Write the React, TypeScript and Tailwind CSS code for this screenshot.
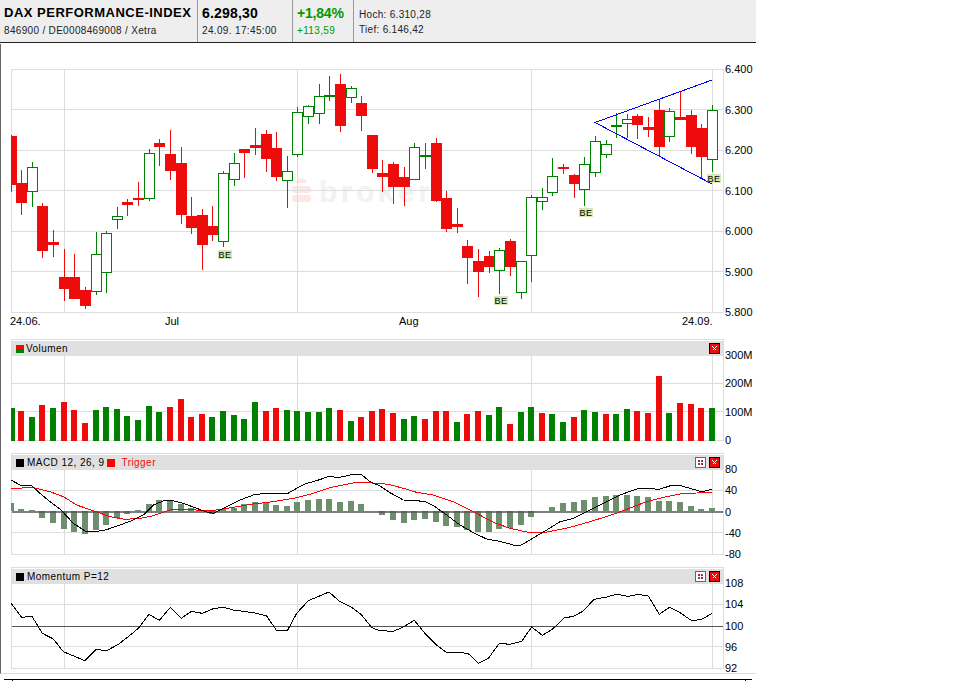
import type { ReactNode } from "react";

const GREEN = "#008000";
const RED = "#ee0b0b";
const GRID = "#dddddd";
const VERTICALS = [64, 297, 531, 712];

// [x, green?, body top, body bottom, wick top, wick bottom], y in 3x crop units from y=60
const CANDLES: [number, number, number, number, number, number][] = [
  [11, 0, 228, 375, 225, 395], [21, 0, 370, 428, 330, 465], [32, 1, 322, 395, 306, 440],
  [42, 0, 438, 572, 430, 593], [53, 0, 546, 554, 510, 590], [64, 0, 652, 686, 567, 722],
  [74, 0, 652, 716, 582, 716], [85, 0, 690, 737, 682, 746], [96, 1, 583, 697, 516, 704],
  [106, 1, 520, 640, 514, 698], [117, 1, 469, 481, 441, 506], [127, 0, 426, 434, 418, 467],
  [138, 0, 414, 419, 366, 437], [149, 1, 280, 418, 267, 422], [159, 0, 250, 260, 237, 318],
  [170, 0, 282, 332, 210, 360], [181, 0, 310, 464, 261, 491], [191, 0, 468, 503, 411, 521],
  [202, 0, 465, 554, 447, 630], [212, 0, 498, 524, 438, 542], [223, 1, 340, 547, 334, 561],
  [234, 1, 310, 361, 279, 377], [244, 0, 267, 278, 267, 353], [255, 0, 255, 263, 204, 284],
  [266, 0, 222, 296, 210, 335], [276, 0, 264, 350, 216, 362], [287, 1, 334, 364, 288, 443],
  [297, 1, 157, 286, 141, 292], [308, 1, 139, 172, 136, 191], [319, 1, 109, 163, 72, 191],
  [329, 1, 105, 109, 48, 122], [340, 0, 72, 197, 42, 215], [351, 1, 85, 115, 79, 128],
  [361, 0, 129, 167, 108, 212], [372, 0, 225, 326, 225, 338], [382, 0, 339, 350, 300, 395],
  [393, 0, 312, 380, 306, 431], [404, 0, 351, 380, 321, 437], [414, 1, 262, 361, 249, 361],
  [425, 1, 285, 290, 249, 326], [436, 0, 249, 422, 234, 427], [446, 0, 414, 506, 393, 515],
  [457, 0, 492, 500, 444, 518], [467, 0, 558, 593, 540, 671], [478, 0, 603, 635, 567, 710],
  [489, 0, 588, 620, 573, 638], [499, 1, 571, 634, 564, 701], [510, 0, 543, 620, 537, 648],
  [521, 1, 604, 700, 604, 716], [531, 1, 412, 589, 406, 665], [542, 1, 412, 427, 385, 449],
  [552, 1, 349, 400, 294, 407], [563, 0, 321, 327, 312, 342], [574, 0, 345, 371, 342, 413],
  [584, 1, 313, 391, 291, 437], [595, 1, 244, 340, 228, 350], [606, 1, 253, 286, 240, 293],
  [616, 1, 196, 200, 160, 234], [627, 1, 178, 193, 163, 234], [637, 0, 168, 194, 163, 236],
  [648, 0, 201, 209, 171, 231], [659, 0, 150, 260, 117, 290], [669, 1, 154, 232, 144, 246],
  [680, 0, 171, 179, 96, 179], [691, 0, 165, 260, 150, 281], [701, 0, 204, 290, 192, 354],
  [712, 1, 151, 301, 135, 336],
];

// top of each volume bar, 3x crop units from y=335; negative = red
const VOLUME = [
  219, -228, 246, -210, 219, -201, -225, -264, 225, 216, 222, 243, 255, 213, 231, -216, -192,
  -246, -237, 246, 228, 240, 252, 201, -228, -219, 225, 228, 231, 231, 219, -225, 258, -246,
  -228, -222, -234, 252, 243, -252, -228, -228, 261, -237, -228, 240, 216, -267, 231, 216, -234,
  237, 261, -246, 225, 231, -237, 237, 222, -228, -234, -123, 234, -204, -207, -219, 219,
];

// histogram height in px above (+) or below (-) the zero line
const HISTOGRAM = [
  8, 2, 1, -7, -12, -18, -21, -23, -19, -14, -7, -3, 1, 7, 11, 11, 7, 3, 1, -3, 2, 3, 7, 9, 9, 6,
  5, 9, 11, 12, 12, 9, 10, 7, 0, -4, -9, -12, -9, -8, -11, -15, -16, -19, -21, -21, -18, -17, -14,
  -6, 0, 4, 8, 9, 11, 14, 15, 16, 16, 15, 14, 10, 10, 9, 5, 2, 3,
];

// line points, read in 3x crops: left half starts at x=0, right half at x=380
const MACD_LINE = [
  [33, 90], [60, 105], [96, 108], [120, 130], [150, 155], [183, 180], [220, 220], [255, 243],
  [290, 244], [320, 239], [360, 225], [400, 210], [430, 195], [460, 165], [490, 153], [515, 151],
  [550, 160], [590, 175], [620, 186], [640, 190], [680, 170], [720, 150], [760, 135], [800, 129],
  [860, 132], [890, 115], [920, 100], [950, 92], [985, 80], [1020, 82], [1060, 73], [1085, 74],
  [1110, 95], [1140, 108], [1170, 128], [1210, 150], [1250, 152], [1275, 155], [1305, 170],
  [1340, 195], [1380, 225], [1420, 248], [1460, 267], [1500, 274], [1540, 285], [1560, 287],
  [1590, 270], [1640, 240], [1680, 215], [1720, 205], [1760, 185], [1820, 155], [1860, 135],
  [1910, 117], [1950, 114], [1975, 119], [2015, 106], [2035, 105], [2070, 115], [2105, 125],
  [2137, 118],
];

const TRIGGER_LINE = [
  [33, 115], [100, 113], [150, 125], [190, 140], [230, 165], [285, 184], [330, 200], [375, 208],
  [420, 205], [460, 197], [510, 180], [560, 178], [630, 183], [700, 172], [760, 162], [820, 155],
  [880, 145], [940, 130], [990, 113], [1070, 97], [1140, 100], [1170, 104], [1210, 115],
  [1250, 127], [1300, 135], [1360, 155], [1420, 185], [1480, 217], [1530, 235], [1580, 246],
  [1640, 246], [1710, 232], [1780, 212], [1840, 193], [1880, 178], [1940, 155], [2000, 140],
  [2040, 132], [2090, 129], [2137, 126],
];

const MOMENTUM_LINE = [
  [33, 115], [65, 157], [96, 154], [127, 205], [160, 222], [190, 260], [255, 287], [288, 253],
  [320, 257], [355, 238], [385, 215], [415, 190], [447, 148], [478, 166], [511, 127], [544, 160],
  [574, 139], [607, 145], [640, 131], [670, 127], [700, 135], [760, 143], [800, 153], [830, 197],
  [862, 197], [890, 145], [925, 107], [987, 81], [1020, 110], [1055, 127], [1085, 150],
  [1115, 188], [1140, 197], [1180, 199], [1210, 186], [1243, 166], [1275, 205], [1310, 240],
  [1338, 261], [1380, 262], [1405, 266], [1435, 295], [1465, 280], [1498, 235], [1530, 238],
  [1565, 229], [1595, 186], [1627, 211], [1658, 192], [1692, 159], [1720, 154], [1750, 138],
  [1782, 103], [1820, 96], [1850, 88], [1885, 94], [1915, 88], [1945, 93], [1978, 148],
  [2008, 127], [2040, 143], [2075, 167], [2105, 163], [2137, 145],
];

const BADGES = [
  [218, 250],
  [494, 296],
  [579, 208],
  [707, 174],
];

function points(line: number[][], top: number) {
  return line.map(([x, y]) => `${x / 3},${top + y / 3}`).join(" ");
}

function Grid({ lines, top, bottom, zero }: { lines: number[]; top: number; bottom: number; zero?: number }) {
  return (
    <g shapeRendering="crispEdges">
      {lines.map((y) => (
        <line key={y} x1={12} x2={723} y1={y + 0.5} y2={y + 0.5} stroke={GRID} />
      ))}
      {VERTICALS.map((x) => (
        <line key={x} x1={x + 0.5} x2={x + 0.5} y1={top} y2={bottom} stroke={GRID} />
      ))}
      {zero !== undefined && <line x1={12} x2={723} y1={zero + 0.5} y2={zero + 0.5} stroke="#555555" />}
    </g>
  );
}

function Axis({ labels, className }: { labels: string[]; className: string }) {
  return (
    <div className={`ml-px flex flex-col justify-between text-[11px] leading-[12px] text-black ${className}`}>
      {labels.map((label) => (
        <span key={label}>{label}</span>
      ))}
    </div>
  );
}

function CloseButton() {
  return (
    <svg width="11" height="11" viewBox="0 0 11 11" shapeRendering="crispEdges">
      <rect x="0.5" y="0.5" width="10" height="10" fill={RED} stroke="#000000" />
      <path d="M3.5 3.5l4 4M7.5 3.5l-4 4" stroke="#ffffff" fill="none" />
    </svg>
  );
}

function ExpandButton() {
  return (
    <svg width="11" height="11" viewBox="0 0 11 11" shapeRendering="crispEdges">
      <rect x="0.5" y="0.5" width="10" height="10" fill="#ffffff" stroke="#666666" />
      <rect x="3" y="3" width="2" height="2" fill={RED} />
      <rect x="6" y="3" width="2" height="2" fill="#555555" />
      <rect x="3" y="6" width="2" height="2" fill="#555555" />
      <rect x="6" y="6" width="2" height="2" fill={RED} />
    </svg>
  );
}

function Panel({
  title,
  expand,
  labels,
  children,
}: {
  title: ReactNode;
  expand?: boolean;
  labels: string[];
  children: ReactNode;
}) {
  return (
    <div className="flex h-[102px] items-start">
      <div className="h-[102px] w-[713px] border border-[#dddddd] pt-px">
        <div className="flex h-[15px] items-center bg-[#e0e0e0] pl-1 pr-[3px] text-[10px] tracking-[0.45px] text-black">
          {title}
          <div className="ml-auto flex items-center gap-[3px]">
            {expand && <ExpandButton />}
            <CloseButton />
          </div>
        </div>
        {children}
      </div>
      <Axis labels={labels} className="mt-[10px] h-[97px]" />
    </div>
  );
}

function PriceChart() {
  return (
    <svg width="711" height="242" viewBox="12 70 711 242" className="block overflow-visible">
      <g fontFamily="'Liberation Sans', sans-serif">
        <path d="M296 183a5 4 0 0 1 11 0z" fill="#fde6e6" />
        <rect x="292" y="186" width="19" height="7" rx="3" fill="#fde6e6" />
        <rect x="292" y="195" width="19" height="7" rx="3" fill="#fde6e6" />
        <text x="319" y="202" fontSize="30" fontWeight="700" letterSpacing="3.5" fill="#f2f2f2">
          broker
        </text>
      </g>
      <Grid lines={[109, 150, 190, 231, 271]} top={70} bottom={312} />
      <g shapeRendering="crispEdges">
        {CANDLES.map(([x, green, bodyTop, bodyBottom, wickTop, wickBottom]) => {
          const color = green ? GREEN : RED;
          const top = Math.round(60 + bodyTop / 3);
          const bottom = Math.round(60 + bodyBottom / 3);
          const wickY = Math.round(60 + wickTop / 3);
          const wickEnd = Math.round(60 + wickBottom / 3);
          return (
            <g key={x}>
              <rect x={x} y={wickY} width={1} height={wickEnd - wickY} fill={color} />
              {green ? (
                <rect
                  x={x - 4.5}
                  y={top + 0.5}
                  width={10}
                  height={Math.max(bottom - top - 1, 0.5)}
                  fill="#ffffff"
                  stroke={color}
                />
              ) : (
                <rect
                  x={Math.max(x - 5, 11)}
                  y={top}
                  width={x + 6 - Math.max(x - 5, 11)}
                  height={bottom - top}
                  fill={color}
                />
              )}
            </g>
          );
        })}
      </g>
      {BADGES.map(([x, y]) => (
        <g key={x}>
          <rect x={x} y={y} width={14} height={9} fill="#d6e9b4" shapeRendering="crispEdges" />
          <text
            x={x + 7}
            y={y + 8}
            textAnchor="middle"
            fontSize="9"
            letterSpacing="0.5"
            fill="#000000"
            fontFamily="'Liberation Sans', sans-serif"
          >
            BE
          </text>
        </g>
      ))}
      <polyline
        points="712,80 595,122.5 712,184"
        fill="none"
        stroke="#0000ff"
        shapeRendering="crispEdges"
      />
    </svg>
  );
}

function VolumeChart() {
  return (
    <svg width="711" height="84" viewBox="12 356 711 84" className="block overflow-visible">
      <Grid lines={[383, 411]} top={356} bottom={440} />
      <g shapeRendering="crispEdges">
        {VOLUME.map((value, i) => {
          const y = Math.round(335 + Math.abs(value) / 3);
          const x = i === 0 ? 11 : CANDLES[i][0] - 3;
          return (
            <rect
              key={i}
              x={x}
              y={y}
              width={i === 0 ? 4 : 6}
              height={441 - y}
              fill={value < 0 ? RED : GREEN}
            />
          );
        })}
      </g>
    </svg>
  );
}

function MacdChart() {
  return (
    <svg width="711" height="84" viewBox="12 470 711 84" className="block overflow-visible">
      <Grid lines={[490, 532]} top={470} bottom={554} />
      <g shapeRendering="crispEdges" fill="#6e8f6e">
        {HISTOGRAM.map((value, i) => {
          const x = i === 0 ? 11 : CANDLES[i][0] - 3;
          return (
            <rect
              key={i}
              x={x}
              y={value > 0 ? 511 - value : 511}
              width={i === 0 ? 3 : 6}
              height={Math.abs(value)}
            />
          );
        })}
      </g>
      <line x1={12} x2={723} y1={512} y2={512} stroke="#555555" strokeWidth="1.4" />
      <polyline points={points(TRIGGER_LINE, 450)} fill="none" stroke="#ff0000" shapeRendering="crispEdges" />
      <polyline points={points(MACD_LINE, 450)} fill="none" stroke="#000000" shapeRendering="crispEdges" />
    </svg>
  );
}

function MomentumChart() {
  return (
    <svg width="711" height="84" viewBox="12 584 711 84" className="block overflow-visible">
      <Grid lines={[604, 646]} top={584} bottom={668} zero={626} />
      <polyline points={points(MOMENTUM_LINE, 565)} fill="none" stroke="#000000" shapeRendering="crispEdges" />
    </svg>
  );
}

export default function App() {
  return (
    <div className="min-h-[681px] w-[960px] overflow-hidden bg-white font-['Liberation_Sans',sans-serif] text-black">
      {/* Quote header */}
      <div className="flex h-[43px] w-[756px] border-b border-[#222222] bg-[#eeeeee]">
        <div className="w-[198px] whitespace-nowrap border-r border-[#999999] pl-1 pt-[5px]">
          <div className="text-[13px] font-bold leading-[16px] tracking-[0.5px]">DAX PERFORMANCE-INDEX</div>
          <div className="mt-[4px] text-[10px] leading-[12px] tracking-[0.32px] text-[#222222]">
            846900 / DE0008469008 / Xetra
          </div>
        </div>
        <div className="w-[95px] border-r border-[#999999] pl-[4px] pt-[5px]">
          <div className="text-[14px] font-bold leading-[16px] tracking-[0.2px]">6.298,30</div>
          <div className="mt-[4px] text-[10px] leading-[12px] tracking-[0.35px] text-[#222222]">24.09. 17:45:00</div>
        </div>
        <div className="w-[61px] border-r border-[#999999] pl-[4px] pt-[5px] text-[#009900]">
          <div className="text-[14px] font-bold leading-[16px] tracking-[-0.2px]">+1,84%</div>
          <div className="mt-[4px] text-[10px] leading-[12px] tracking-[0.35px]">+113,59</div>
        </div>
        <div className="pl-[5px] pt-[9px] text-[10px] leading-[12px] tracking-[0.3px] text-[#222222]">
          <div>Hoch: 6.310,28</div>
          <div className="mt-[3px]">Tief: 6.146,42</div>
        </div>
      </div>

      {/* Charts */}
      <div className="mt-px flex w-[756px] flex-col border-b border-l border-b-[#dddddd] border-l-[#666666] pb-1 pl-[10px] pt-[25px]">
        <div className="flex h-[244px] items-start">
          <div className="h-[244px] w-[713px] border border-[#dddddd]">
            <PriceChart />
          </div>
          <Axis
            labels={["6.400", "6.300", "6.200", "6.100", "6.000", "5.900", "5.800"]}
            className="-mt-[6px] h-[255px]"
          />
        </div>
        <div className="flex h-[26px] pt-[2px] text-[11px] leading-[13px]">
          <span className="-ml-px w-[155px]">24.06.</span>
          <span className="w-[234px]">Jul</span>
          <span className="w-[283px]">Aug</span>
          <span>24.09.</span>
        </div>

        <div className="flex flex-col gap-3">
          <Panel
            labels={["300M", "200M", "100M", "0"]}
            title={
              <>
                <span className="flex h-2 w-2 flex-col">
                  <span className="h-1 bg-[#ee0b0b]" />
                  <span className="h-1 bg-[#008000]" />
                </span>
                <span className="ml-[2px]">Volumen</span>
              </>
            }
          >
            <VolumeChart />
          </Panel>

          <Panel
            expand
            labels={["80", "40", "0", "-40", "-80"]}
            title={
              <>
                <span className="h-2 w-2 bg-black" />
                <span className="ml-[3px]">MACD 12, 26, 9</span>
                <span className="ml-[3px] h-2 w-2 bg-[#ff0000]" />
                <span className="ml-[6px] text-[#ee0b0b]">Trigger</span>
              </>
            }
          >
            <MacdChart />
          </Panel>

          <Panel
            expand
            labels={["108", "104", "100", "96", "92"]}
            title={
              <>
                <span className="h-2 w-2 bg-black" />
                <span className="ml-[3px]">Momentum P=12</span>
              </>
            }
          >
            <MomentumChart />
          </Panel>
        </div>
      </div>

      {/* Cut-off row below the charts */}
      <div className="ml-1 mt-[5px] flex h-[3px] w-[748px] border-t border-black">
        <div className="ml-2 h-full border-l border-black" />
        <div className="ml-auto mr-[6px] h-full border-l border-black" />
      </div>
    </div>
  );
}
